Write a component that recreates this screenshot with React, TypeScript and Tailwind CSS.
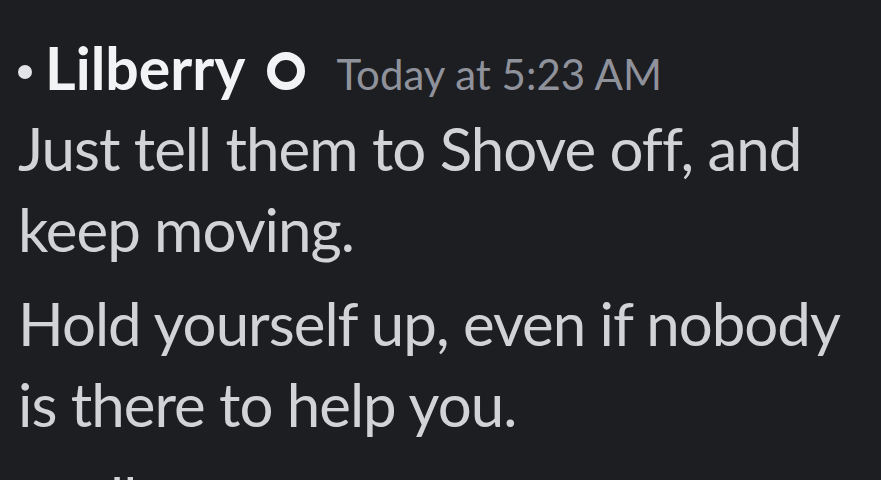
const messages = [
  "Just tell them to Shove off, and keep moving.",
  "Hold yourself up, even if nobody is there to help you.",
  "at all",
];

const App = () => {
  return (
    <div
      className="h-[480px] w-[881px] overflow-hidden bg-[#1d1e22] pl-[18px] pt-[28px]"
      style={{ fontFamily: 'Lato, "Noto Sans", sans-serif' }}
    >
      <div className="flex h-[80px] items-baseline">
        <span className="mt-[8px] h-[14px] w-[14px] shrink-0 self-center rounded-full bg-[#e3e4e8]" />
        <span className="ml-[13px] text-[59px] font-bold leading-[80px] text-[#f2f3f5]">
          Lilberry
        </span>
        <svg
          className="ml-[22px] mt-[6px] h-[38px] w-[38px] shrink-0 self-center"
          viewBox="0 0 38 38"
        >
          <circle cx="19" cy="19" r="15" fill="none" stroke="#f2f3f5" strokeWidth="8" />
        </svg>
        <span className="ml-[31px] text-[42px] leading-[80px] text-[#8f929b]">
          Today at 5:23 AM
        </span>
      </div>
      <div className="flex w-[850px] flex-col gap-[13px] text-[60px] leading-[81px] tracking-[-1px] text-[#d2d3d7]">
        {messages.map((m, i) => (
          <p key={i}>{m}</p>
        ))}
      </div>
    </div>
  );
};

export default App;
